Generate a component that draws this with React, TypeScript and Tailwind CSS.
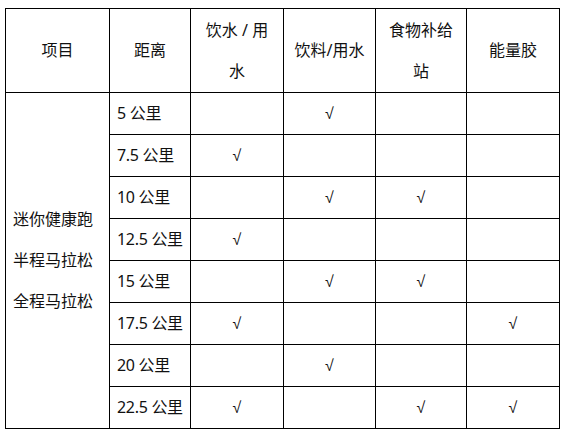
const rows: { km: string; marks: boolean[] }[] = [
  { km: "5 公里", marks: [false, true, false, false] },
  { km: "7.5 公里", marks: [true, false, false, false] },
  { km: "10 公里", marks: [false, true, true, false] },
  { km: "12.5 公里", marks: [true, false, false, false] },
  { km: "15 公里", marks: [false, true, true, false] },
  { km: "17.5 公里", marks: [true, false, false, true] },
  { km: "20 公里", marks: [false, true, false, false] },
  { km: "22.5 公里", marks: [true, false, true, true] },
];

const cell = "border border-black px-[7px] align-middle whitespace-nowrap";

export default function App() {
  return (
    <div className="w-[566px] h-[435px] bg-white pt-[8px] pl-[5px] text-[16px] leading-[41px] text-[#111] [font-family:'Noto_Sans','Noto_Sans_CJK_SC',sans-serif]">
      <table className="table-fixed border-collapse w-[554px]">
        <colgroup>
          <col className="w-[104px]" />
          <col className="w-[81px]" />
          <col className="w-[93px]" />
          <col className="w-[92px]" />
          <col className="w-[91px]" />
          <col className="w-[93px]" />
        </colgroup>
        <thead>
          <tr className="h-[84px]">
            <th className={`${cell} font-normal text-center`}>项目</th>
            <th className={`${cell} font-normal text-center`}>距离</th>
            <th className={`${cell} font-normal text-center`}>
              饮水 / 用<br />水
            </th>
            <th className={`${cell} font-normal text-center`}>饮料/用水</th>
            <th className={`${cell} font-normal text-center`}>
              食物补给<br />站
            </th>
            <th className={`${cell} font-normal text-center`}>能量胶</th>
          </tr>
        </thead>
        <tbody>
          {rows.map((r, i) => (
            <tr key={r.km} className="h-[42px]">
              {i === 0 && (
                <td rowSpan={8} className={`${cell} text-left`}>
                  迷你健康跑<br />半程马拉松<br />全程马拉松
                </td>
              )}
              <td className={`${cell} text-left tracking-[-0.3px]`}>{r.km}</td>
              {r.marks.map((m, j) => (
                <td key={j} className={`${cell} text-center leading-[40px] [font-family:'Liberation_Sans',sans-serif]`}>
                  {m ? "√" : ""}
                </td>
              ))}
            </tr>
          ))}
        </tbody>
      </table>
    </div>
  );
}
